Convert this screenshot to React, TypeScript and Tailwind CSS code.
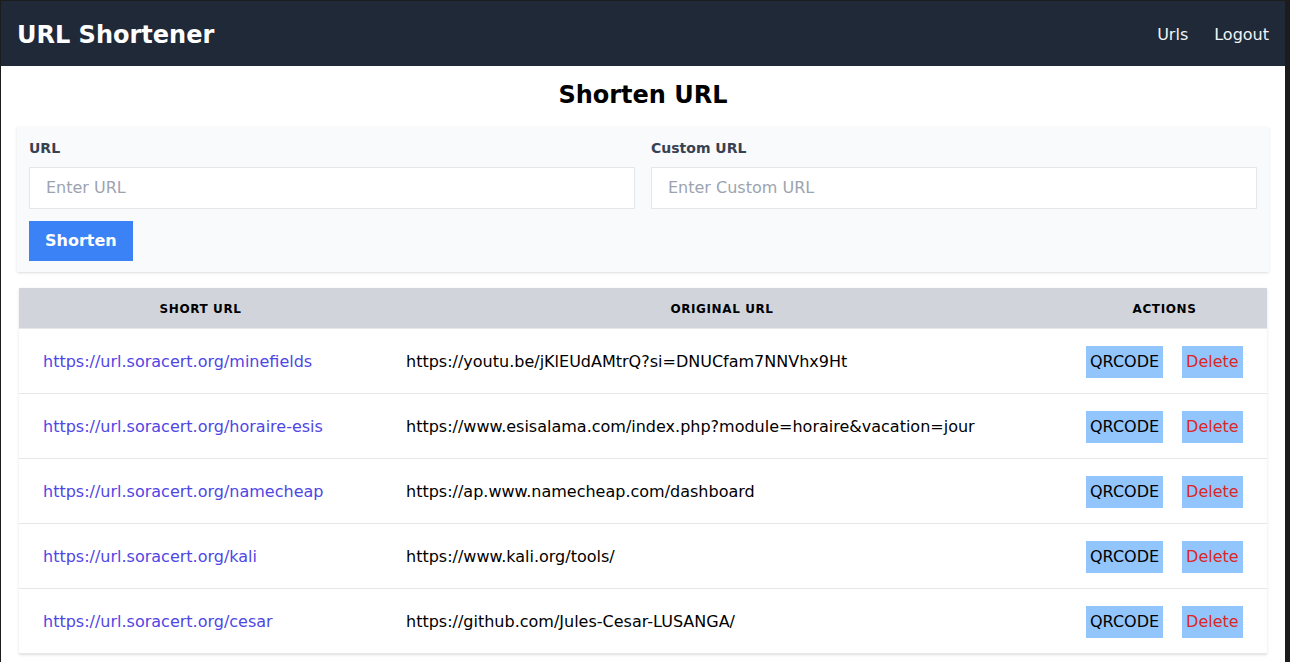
import React from "react";

const urls = [
  { short: "https://url.soracert.org/minefields", original: "https://youtu.be/jKlEUdAMtrQ?si=DNUCfam7NNVhx9Ht" },
  { short: "https://url.soracert.org/horaire-esis", original: "https://www.esisalama.com/index.php?module=horaire&vacation=jour" },
  { short: "https://url.soracert.org/namecheap", original: "https://ap.www.namecheap.com/dashboard" },
  { short: "https://url.soracert.org/kali", original: "https://www.kali.org/tools/" },
  { short: "https://url.soracert.org/cesar", original: "https://github.com/Jules-Cesar-LUSANGA/" },
];

export default function App() {
  return (
    <div className="flex min-h-[662px] bg-[#1c1c1c] pt-px pl-px pr-[5px] font-['DejaVu_Sans',sans-serif]">
      <div className="flex-1 bg-white">
        {/* navbar */}
        <nav className="h-[65px] bg-[#1f2937] px-4 pt-[2px] flex items-center justify-between">
          <h1 className="text-2xl font-bold text-white">URL Shortener</h1>
          <div className="flex gap-[26px] text-gray-100">
            <a href="#">Urls</a>
            <a href="#">Logout</a>
          </div>
        </nav>

        <main className="px-4 pt-[13px]">
          <h2 className="text-2xl font-bold text-center text-black mb-4">Shorten URL</h2>

          {/* form */}
          <div className="bg-[#f9fafb] shadow pt-[11px] px-3 pb-[11px]">
            <div className="grid grid-cols-2 gap-4">
              <div>
                <label className="block text-sm font-bold text-[#374151] mb-[9px]">URL</label>
                <input
                  className="w-full border border-[#e5e7eb] bg-white px-4 py-2 text-base placeholder-[#9ca3af] outline-none"
                  placeholder="Enter URL"
                />
              </div>
              <div>
                <label className="block text-sm font-bold text-[#374151] mb-[9px]">Custom URL</label>
                <input
                  className="w-full border border-[#e5e7eb] bg-white px-4 py-2 text-base placeholder-[#9ca3af] outline-none"
                  placeholder="Enter Custom URL"
                />
              </div>
            </div>
            <button className="mt-3 bg-[#3b82f6] text-white font-bold px-4 py-2">Shorten</button>
          </div>

          {/* table */}
          <div className="mt-4 mx-[2px] shadow">
            <table className="w-full table-fixed border-collapse">
              <thead>
                <tr className="bg-[#d1d5db] border-b border-[#e5e7eb]">
                  <th className="w-[363px] pt-[13px] pb-[11px] text-xs font-bold uppercase tracking-wider text-black">Short URL</th>
                  <th className="pt-[13px] pb-[11px] text-xs font-bold uppercase tracking-wider text-black">Original URL</th>
                  <th className="w-[205px] pt-[13px] pb-[11px] text-xs font-bold uppercase tracking-wider text-black">Actions</th>
                </tr>
              </thead>
              <tbody>
                {urls.map((u, i) => (
                  <tr key={i} className="border-b border-[#e5e7eb]">
                    <td className="px-6 pt-[17px] pb-[15px] text-[#4f46e5] whitespace-nowrap">
                      <a href="#">{u.short}</a>
                    </td>
                    <td className="px-6 pt-[17px] pb-[15px] text-black whitespace-nowrap">{u.original}</td>
                    <td className="px-6 pt-[17px] pb-[15px]">
                      <div className="flex gap-[19px]">
                        <button className="bg-[#93c5fd] text-black px-1 py-1">QRCODE</button>
                        <button className="bg-[#93c5fd] text-[#dc2626] px-1 py-1">Delete</button>
                      </div>
                    </td>
                  </tr>
                ))}
              </tbody>
            </table>
          </div>
        </main>
      </div>
    </div>
  );
}
